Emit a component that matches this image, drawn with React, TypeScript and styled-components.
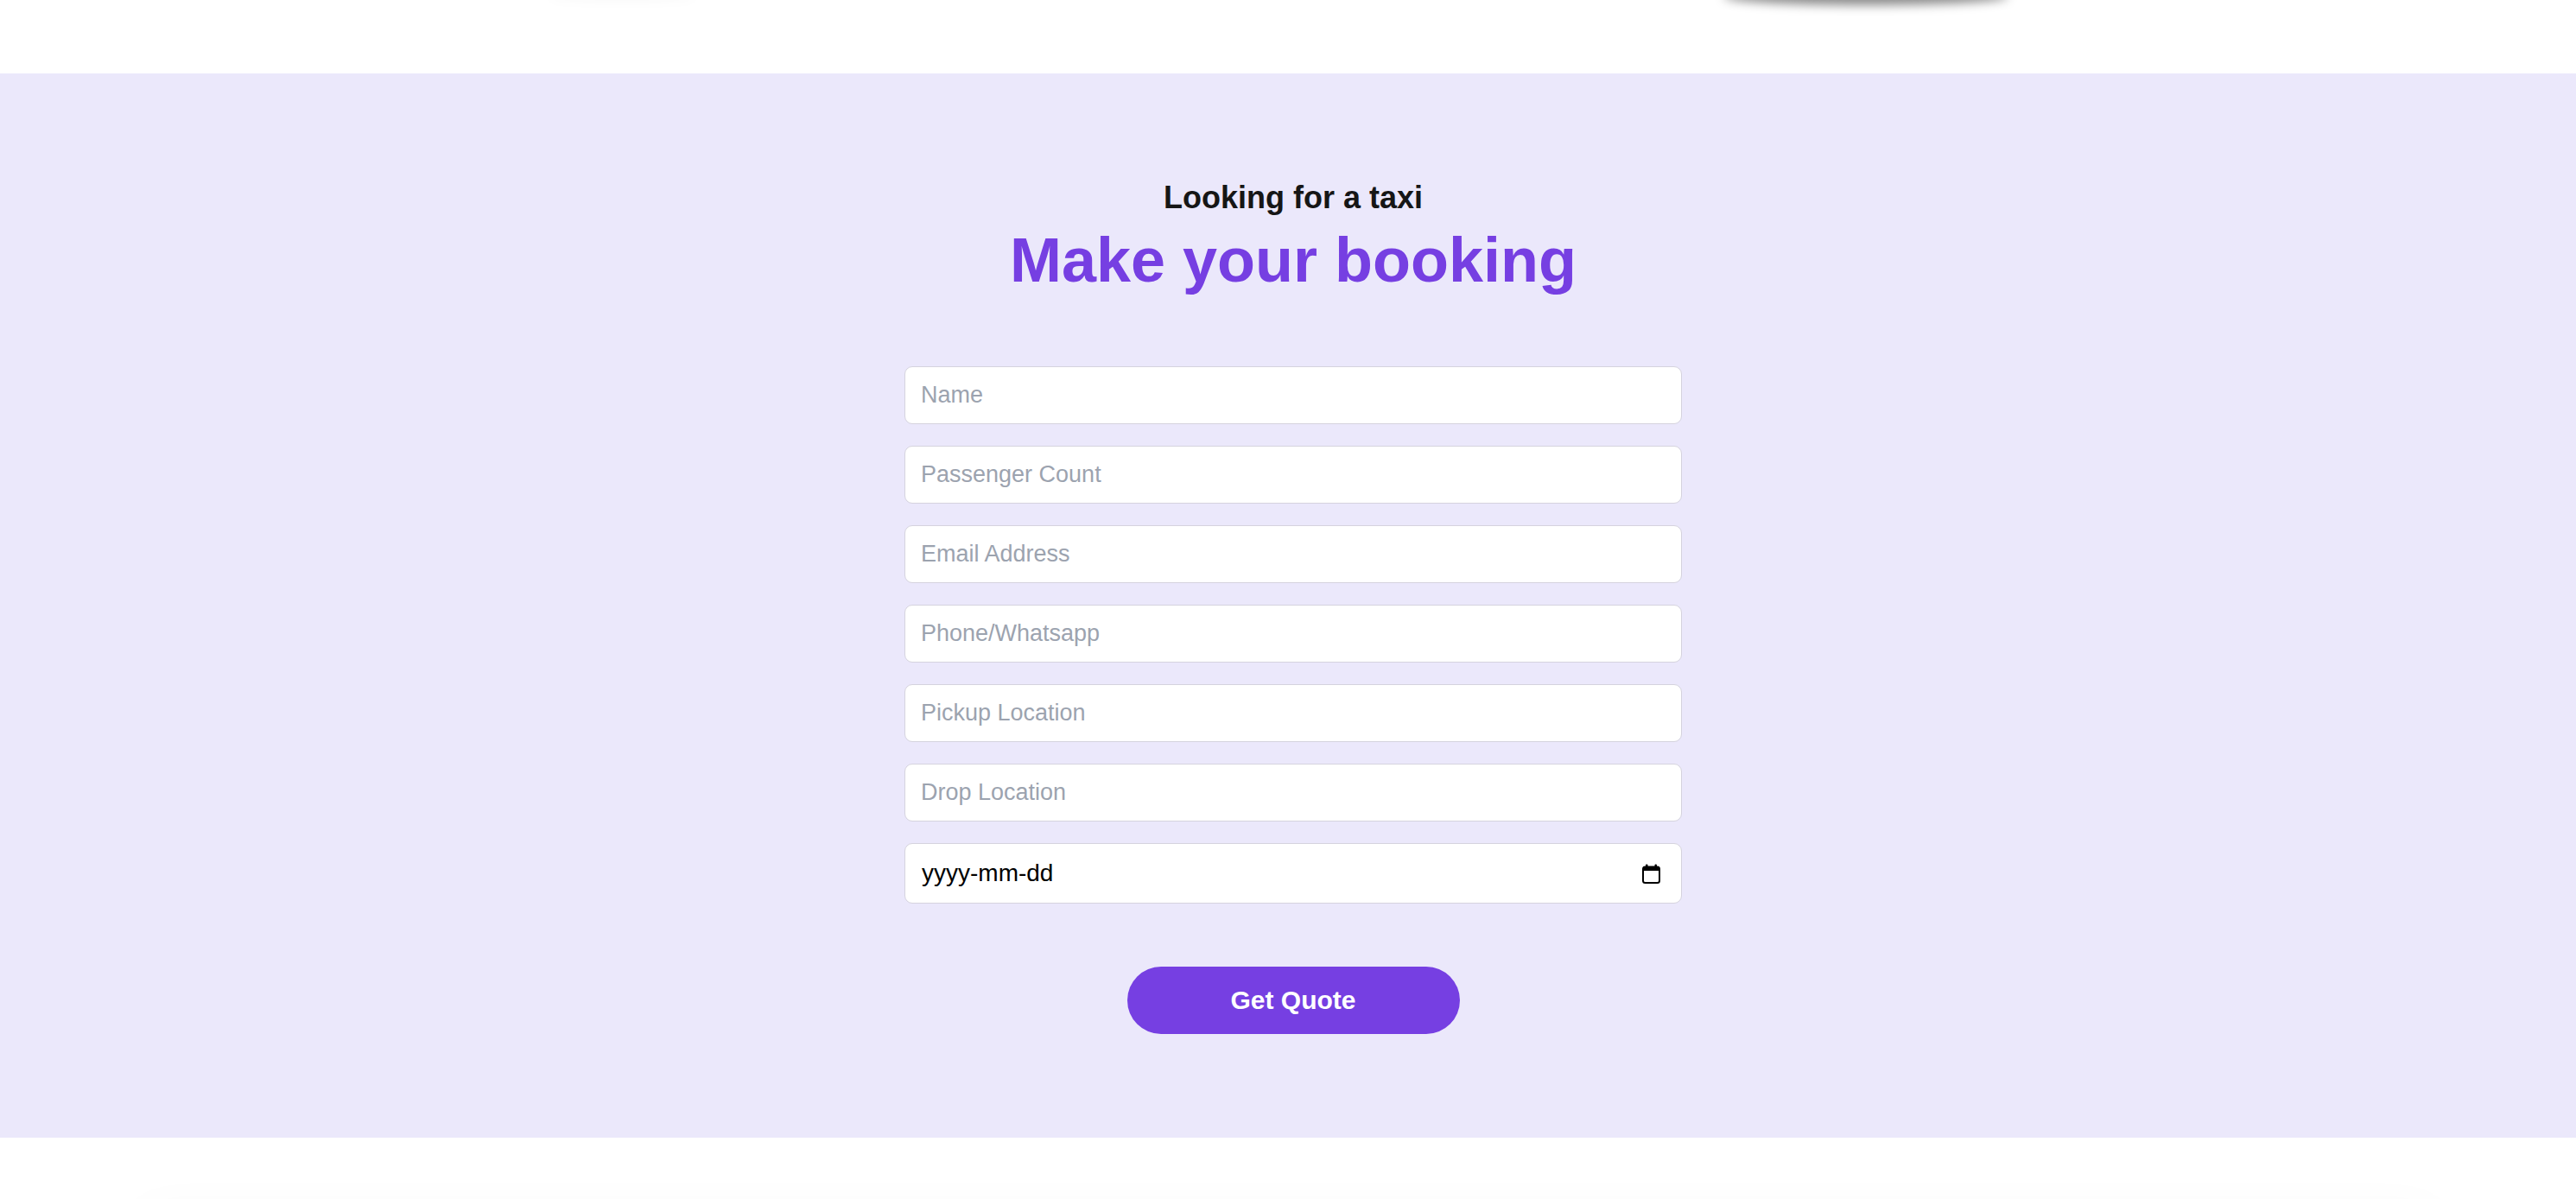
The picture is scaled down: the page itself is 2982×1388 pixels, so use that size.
import styled, { createGlobalStyle } from "styled-components";

const GlobalStyle = createGlobalStyle`
  * {
    box-sizing: border-box;
  }

  body {
    margin: 0;
    background: #ffffff;
    font-family: "Liberation Sans", Arial, Helvetica, sans-serif;
    color: #151515;
  }
`;

const PURPLE = "#763fe2";

const Page = styled.div`
  display: flex;
  flex-direction: column;
  min-height: 100vh;
  overflow: hidden;
`;

/* bottom of the hero above: only the car shadows peek through */
const HeroTail = styled.div`
  height: 85px;
  background: #ffffff;

  svg {
    display: block;
    width: 100%;
    height: 100%;
  }
`;

const BookingSection = styled.section`
  display: flex;
  flex-direction: column;
  align-items: center;
  padding: 122px 0 120px 12px;
  background: #ebe8fb;
`;

const Eyebrow = styled.h3`
  margin: 0;
  font-size: 36px;
  line-height: 43px;
  font-weight: 700;
  color: #161616;
`;

const Title = styled.h2`
  margin: 8px 0 0;
  font-size: 72px;
  line-height: 86px;
  font-weight: 700;
  color: ${PURPLE};
`;

const Form = styled.form`
  display: flex;
  flex-direction: column;
  align-items: center;
  width: 900px;
  margin-top: 80px;
`;

const Fields = styled.div`
  display: flex;
  flex-direction: column;
  gap: 25px;
  width: 100%;
`;

const Field = styled.input`
  width: 100%;
  height: 67px;
  padding: 0 18px;
  border: 1.5px solid #d5d3de;
  border-radius: 9px;
  background: #ffffff;
  font-family: inherit;
  font-size: 27px;
  color: #151515;
  outline: none;

  &::placeholder {
    color: #9ca3af;
  }
`;

const DateField = styled.label`
  display: flex;
  align-items: center;
  justify-content: space-between;
  width: 100%;
  height: 70px;
  padding: 0 24px 0 19px;
  border: 1.5px solid #d5d3de;
  border-radius: 9px;
  background: #ffffff;
  font-size: 28px;
  color: #000000;
  cursor: text;
`;

const SubmitButton = styled.button`
  width: 385px;
  height: 78px;
  margin-top: 73px;
  border: none;
  border-radius: 999px;
  background: ${PURPLE};
  color: #ffffff;
  font-family: inherit;
  font-size: 30px;
  font-weight: 700;
  cursor: pointer;
`;

const NextSection = styled.section`
  padding: 80px 150px 0;
  background: #ffffff;
`;

const TestimonialCard = styled.div`
  height: 400px;
  border-radius: 40px;
  background: #ffffff;
  box-shadow: 0 -6px 50px rgba(0, 0, 0, 0.018);
`;

function CalendarIcon() {
  return (
    <svg width="21" height="23" viewBox="0 0 21 23" aria-hidden="true">
      <rect x="1" y="3.5" width="19" height="18.5" rx="2.5" fill="none" stroke="#000" strokeWidth="2" />
      <rect x="1" y="3.5" width="19" height="4.5" fill="#000" />
      <rect x="4" y="0.5" width="2.5" height="4" rx="1" fill="#000" />
      <rect x="14.5" y="0.5" width="2.5" height="4" rx="1" fill="#000" />
    </svg>
  );
}

const fields = [
  { name: "name", type: "text", placeholder: "Name" },
  { name: "passengers", type: "text", placeholder: "Passenger Count" },
  { name: "email", type: "email", placeholder: "Email Address" },
  { name: "phone", type: "tel", placeholder: "Phone/Whatsapp" },
  { name: "pickup", type: "text", placeholder: "Pickup Location" },
  { name: "drop", type: "text", placeholder: "Drop Location" },
];

export default function App() {
  return (
    <Page>
      <GlobalStyle />

      <HeroTail>
        <svg viewBox="0 0 2982 85" preserveAspectRatio="none" aria-hidden="true">
          <defs>
            <filter id="soft" x="-30%" y="-300%" width="160%" height="700%">
              <feGaussianBlur stdDeviation="6" />
            </filter>
          </defs>
          <ellipse cx="2160" cy="-4" rx="165" ry="10" fill="rgba(0,0,0,0.45)" filter="url(#soft)" />
          <ellipse cx="720" cy="-4" rx="85" ry="5" fill="rgba(0,0,0,0.03)" filter="url(#soft)" />
        </svg>
      </HeroTail>

      <BookingSection>
        <Eyebrow>Looking for a taxi</Eyebrow>
        <Title>Make your booking</Title>

        <Form onSubmit={(e) => e.preventDefault()}>
          <Fields>
            {fields.map((f) => (
              <Field key={f.name} name={f.name} type={f.type} placeholder={f.placeholder} />
            ))}
            <DateField>
              <span>yyyy-mm-dd</span>
              <CalendarIcon />
            </DateField>
          </Fields>
          <SubmitButton type="submit">Get Quote</SubmitButton>
        </Form>
      </BookingSection>

      <NextSection>
        <TestimonialCard />
      </NextSection>
    </Page>
  );
}
